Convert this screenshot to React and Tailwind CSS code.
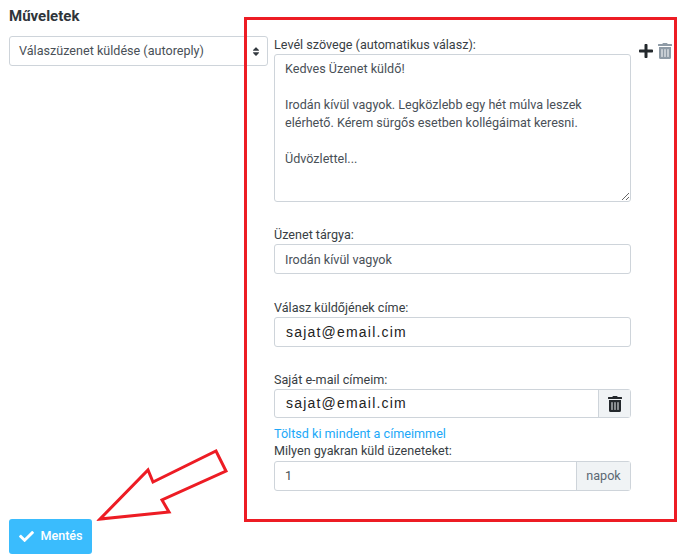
import { FaCheck, FaPlus, FaSort, FaTrashAlt } from "react-icons/fa";

function Label({ children }) {
  return <label className="block h-[18px] text-[12.6px] leading-[18px] text-[#383e44]">{children}</label>;
}

function TextInput({ value }) {
  return (
    <div className="flex h-[30px] items-center rounded-[3px] border border-[#ced4da] bg-white px-[10px] text-[12.6px] text-[#495057]">
      {value}
    </div>
  );
}

function EmailText() {
  return (
    <span className="pl-[1px] font-['Liberation_Sans',sans-serif] text-[14px] tracking-[1.2px] text-[#222]">
      sajat@email.cim
    </span>
  );
}

export default function App() {
  return (
    <div className="relative h-[559px] w-[677px] overflow-hidden bg-white pl-[9px] font-['Roboto',sans-serif]">
      <h2 className="pt-[6px] text-[15px] leading-[20px] font-bold text-[#2f353a]">Műveletek</h2>

      <div className="mt-[10px] flex h-[463px] items-start">
        <div className="flex h-[30px] w-[259px] items-center justify-between rounded-[3px] border border-[#ced4da] bg-white pr-[7px] pl-[9px] text-[12.6px] text-[#495057]">
          <span>Válaszüzenet küldése (autoreply)</span>
          <FaSort className="h-[11px] w-[8px] text-[#343a40]" />
        </div>

        <div className="ml-[6px] w-[357px]">
          <Label>Levél szövege (automatikus válasz):</Label>
          <textarea
            readOnly
            className="block h-[148px] w-full rounded-[3px] border border-[#ced4da] bg-white px-[10px] py-[5px] text-[12.6px] leading-[18px] text-[#495057]"
            value={"Kedves Üzenet küldő!\n\nIrodán kívül vagyok. Legközlebb egy hét múlva leszek elérhető. Kérem sürgős esetben kollégáimat keresni.\n\nÜdvözlettel..."}
          />

          <div className="mt-[24px]">
            <Label>Üzenet tárgya:</Label>
            <TextInput value={<span className="pt-[2px]">Irodán kívül vagyok</span>} />
          </div>

          <div className="mt-[25px]">
            <Label>Válasz küldőjének címe:</Label>
            <TextInput value={<EmailText />} />
          </div>

          <div className="mt-[24px]">
            <Label>Saját e-mail címeim:</Label>
            <div className="flex h-[29px] rounded-[3px] border border-[#ced4da]">
              <div className="flex flex-1 items-center px-[10px]">
                <EmailText />
              </div>
              <div className="flex w-[32px] items-center justify-center border-l border-[#ced4da] bg-[#f0f3f5]">
                <FaTrashAlt className="h-[16px] w-[14px] text-[#23282c]" />
              </div>
            </div>
          </div>

          <a className="mt-[7px] block h-[17px] text-[12.6px] leading-[18px] text-[#20a8f8]">Töltsd ki mindent a címeimmel</a>
          <Label>Milyen gyakran küld üzeneteket:</Label>
          <div className="mt-[1px] flex h-[30px] rounded-[3px] border border-[#ced4da]">
            <div className="flex flex-1 items-center px-[10px] text-[12.6px] text-[#495057]">1</div>
            <div className="flex w-[54px] items-center justify-center border-l border-[#ced4da] bg-[#f0f3f5] text-[12.6px] text-[#5c6873]">
              napok
            </div>
          </div>
        </div>

        <div className="mt-[7px] ml-[8px] flex items-center gap-[5px]">
          <FaPlus className="h-[16px] w-[14px] text-[#23282c]" />
          <FaTrashAlt className="h-[16px] w-[14px] text-[#8f9ba6]" />
        </div>
      </div>

      <button className="mt-[20px] flex h-[35px] w-[83px] items-center justify-center gap-[5px] rounded-[3px] bg-[#3abcfd] text-[12.6px] font-medium text-white">
        <FaCheck className="h-[15px] w-[17px]" />
        Mentés
      </button>

      {/* annotation drawn over the form */}
      <div className="absolute top-[17px] left-[244px] h-[505px] w-[433px] border-[3px] border-[#ed1c24]" />
      <svg className="absolute top-[445px] left-[92px]" width="140" height="80" viewBox="0 0 140 80" fill="none">
        <path d="M8 74 L56 25 L61 37 L124 6 L134 26 L70 55 L77 67 Z" stroke="#ed1c24" strokeWidth="3" />
      </svg>
    </div>
  );
}
